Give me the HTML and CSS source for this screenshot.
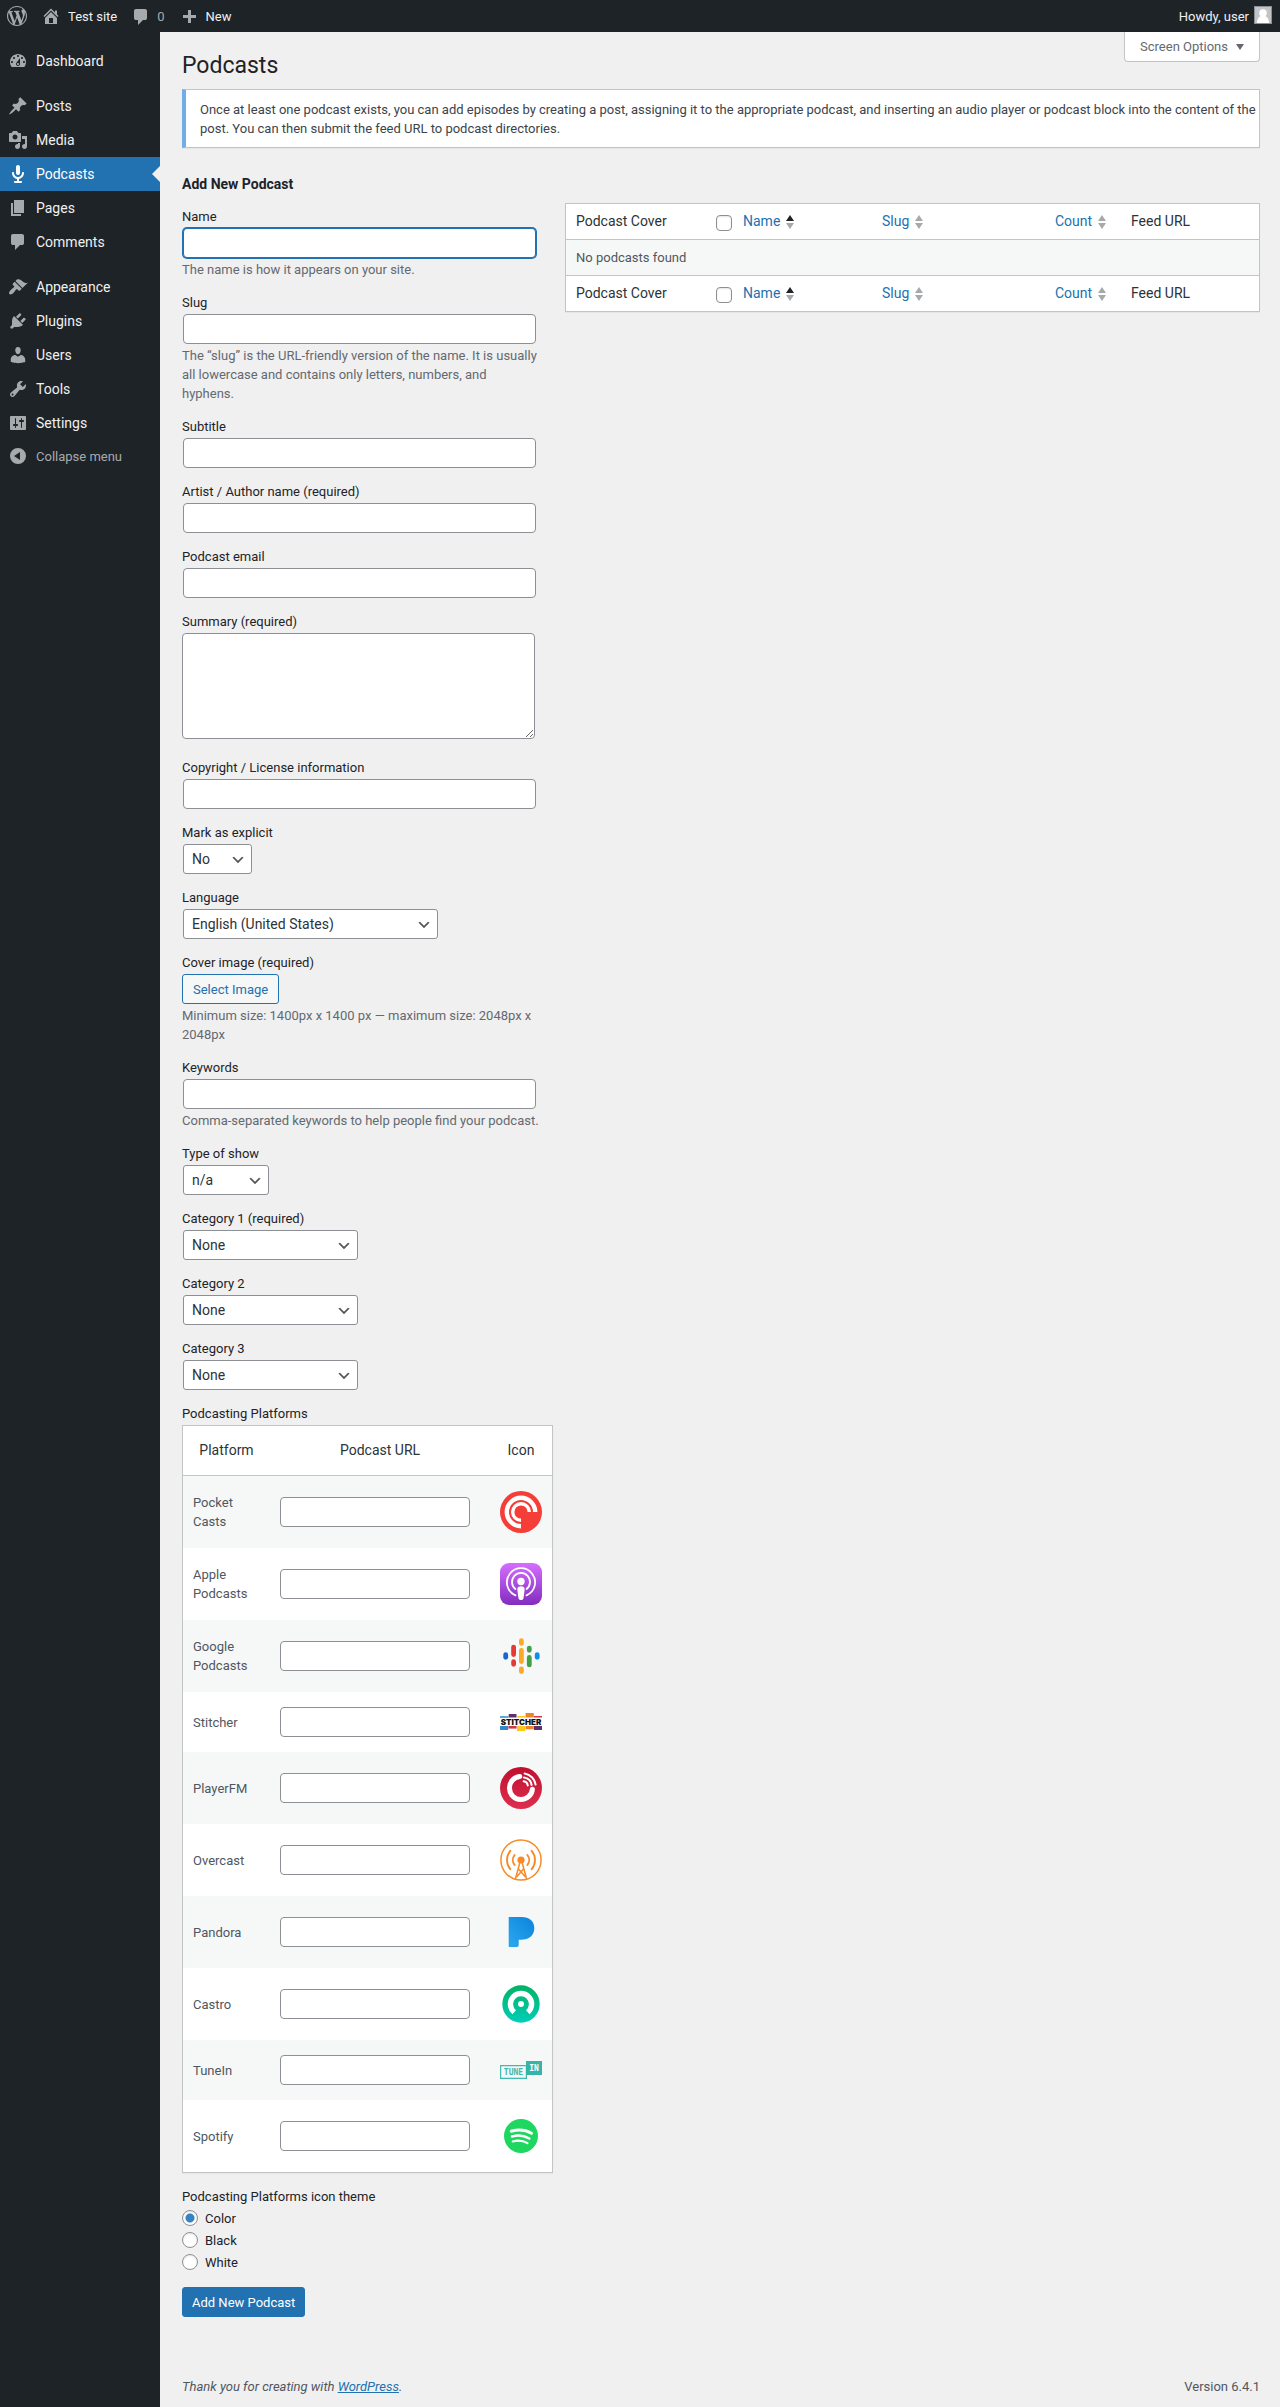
FILE: index.html
```html
<!DOCTYPE html>
<html lang="en-US">
<head>
<meta charset="utf-8">
<meta name="viewport" content="width=device-width, initial-scale=1">
<title>Podcasts ‹ Test site — WordPress</title>
<link rel="stylesheet" href="styles.css">
</head>
<body>
<header class="adminbar">
  <a class="bar-item" href="#" aria-label="About WordPress"><svg class="icon" viewBox="0 0 20 20"><path d="M20 10c0-5.51-4.49-10-10-10C4.48 0 0 4.49 0 10c0 5.52 4.48 10 10 10 5.51 0 10-4.48 10-10zM7.78 15.37L4.37 6.22c.55-.02 1.17-.08 1.17-.08.5-.06.44-1.13-.06-1.11 0 0-1.45.11-2.37.11-.18 0-.37 0-.58-.01C4.12 2.69 6.87 1.11 10 1.11c2.33 0 4.45.87 6.05 2.34-.68-.11-1.65.39-1.65 1.58 0 .74.45 1.36.9 2.1.35.61.55 1.36.55 2.46 0 1.49-1.4 5-1.4 5l-3.03-8.37c.54-.02.82-.17.82-.17.5-.05.44-1.25-.06-1.22 0 0-1.44.12-2.38.12-.87 0-2.33-.12-2.33-.12-.5-.03-.56 1.2-.06 1.22l.92.08 1.26 3.41zM17.41 10c.24-.64.74-1.87.43-4.25.7 1.29 1.05 2.71 1.05 4.25 0 3.29-1.73 6.24-4.4 7.78.97-2.59 1.94-5.2 2.92-7.78zM6.1 18.09C3.12 16.65 1.11 13.53 1.11 10c0-1.3.23-2.48.72-3.59C3.25 10.3 4.67 14.2 6.1 18.09zm4.03-6.63l2.58 6.98c-.86.29-1.76.45-2.71.45-.79 0-1.57-.11-2.29-.33.81-2.38 1.62-4.74 2.42-7.1z"/></svg></a>
  <a class="bar-item" href="#"><svg class="icon" viewBox="0 0 20 20"><path d="M16 8.5l1.53 1.53-1.06 1.06L10 4.6l-6.47 6.49-1.06-1.06L10 2.5l4 4v-2h2v4zm-6-2.46l6 5.99V18H4v-5.97zM12 17v-5H8v5h4z"/></svg>Test site</a>
  <a class="bar-item bar-count" href="#"><svg class="icon" viewBox="0 0 20 20"><path d="M5 2h9q.82 0 1.41.59T16 4v7q0 .82-.59 1.41T14 13h-2l-5 5v-5H5q-.82 0-1.41-.59T3 11V4q0-.82.59-1.41T5 2z"/></svg>0</a>
  <a class="bar-item" href="#"><svg class="icon" viewBox="0 0 20 20"><path d="M17 9v3h-5v5H9v-5H4V9h5V4h3v5h5z"/></svg>New</a>
  <a class="bar-item bar-user" href="#">Howdy, user<svg class="avatar" viewBox="0 0 16 16"><path fill="#c3c4c7" d="M0 0h16v16H0z"/><circle cx="8" cy="6" r="3.8" fill="#fff"/><path fill="#fff" d="M6 9h4c2.500.5 4 4 4 7H2c0-3 1.500-6.500 4-7z"/></svg></a>
</header>

<div class="shell">
  <nav class="menu" aria-label="Main menu">
    <ul>
      <li><a href="#"><svg class="icon" viewBox="0 0 20 20"><path d="M3.76 16h12.48c1.1-1.37 1.76-3.11 1.76-5 0-4.42-3.58-8-8-8s-8 3.58-8 8c0 1.89.66 3.63 1.76 5zM10 4c.55 0 1 .45 1 1s-.45 1-1 1-1-.45-1-1 .45-1 1-1zM6 6c.55 0 1 .45 1 1s-.45 1-1 1-1-.45-1-1 .45-1 1-1zm8 0c.55 0 1 .45 1 1s-.45 1-1 1-1-.45-1-1 .45-1 1-1zm-5.37 5.55L12 7v6c0 1.1-.9 2-2 2s-2-.9-2-2c0-.57.24-1.08.63-1.45zM4 10c.55 0 1 .45 1 1s-.45 1-1 1-1-.45-1-1 .45-1 1-1zm12 0c.55 0 1 .45 1 1s-.45 1-1 1-1-.45-1-1 .45-1 1-1zm-5 3c0-.55-.45-1-1-1s-1 .45-1 1 .45 1 1 1 1-.45 1-1z"/></svg>Dashboard</a></li>
      <li class="group"><a href="#"><svg class="icon" viewBox="0 0 20 20"><path d="M10.44 3.02l1.82-1.82 6.36 6.35-1.83 1.82c-1.05-.68-2.48-.57-3.41.36l-.75.75c-.92.93-1.04 2.35-.35 3.41l-1.83 1.82-2.41-2.41-2.8 2.79c-.42.42-3.38 2.71-3.8 2.29s1.86-3.39 2.28-3.81l2.79-2.79L4.1 9.36l1.83-1.82c1.05.69 2.48.57 3.4-.36l.75-.75c.93-.92 1.05-2.35.36-3.41z"/></svg>Posts</a></li>
      <li><a href="#"><svg class="icon" viewBox="0 0 20 20"><path d="M13 11V4c0-.55-.45-1-1-1h-1.67L9 1H5L3.67 3H2c-.55 0-1 .45-1 1v7c0 .55.45 1 1 1h10c.55 0 1-.45 1-1zM7 4.5c1.38 0 2.500 1.120 2.500 2.500S8.380 9.500 7 9.500 4.500 8.380 4.500 7 5.620 4.500 7 4.500zM14 6h5v10.500c0 1.380-1.120 2.500-2.500 2.500S14 17.880 14 16.500s1.120-2.500 2.500-2.500c.17 0 .34.02.5.05V9h-3V6zm-4 8.050V13h2v3.500c0 1.380-1.120 2.500-2.500 2.500S7 17.880 7 16.500 8.120 14 9.500 14c.17 0 .34.02.5.05z"/></svg>Media</a></li>
      <li><a class="current" href="#" aria-current="page"><svg class="icon" viewBox="0 0 20 20"><path d="M12 9V3c0-1.1-.89-2-2-2-1.12 0-2 .94-2 2v6c0 1.1.9 2 2 2 1.13 0 2-.94 2-2zm4 0c0 2.97-2.16 5.43-5 5.91V17h2c.56 0 1 .45 1 1s-.44 1-1 1H7c-.55 0-1-.45-1-1s.45-1 1-1h2v-2.09C6.17 14.43 4 11.97 4 9c0-.55.45-1 1-1 .56 0 1 .45 1 1 0 2.21 1.8 4 4 4 2.21 0 4-1.79 4-4 0-.55.45-1 1-1 .56 0 1 .45 1 1z"/></svg>Podcasts</a></li>
      <li><a href="#"><svg class="icon" viewBox="0 0 20 20"><path d="M6 15V2h10v13H6zm-1 1h8v2H3V5h2v11z"/></svg>Pages</a></li>
      <li><a href="#"><svg class="icon" viewBox="0 0 20 20"><path d="M5 2h9q.82 0 1.41.59T16 4v7q0 .82-.59 1.41T14 13h-2l-5 5v-5H5q-.82 0-1.41-.59T3 11V4q0-.82.59-1.41T5 2z"/></svg>Comments</a></li>
      <li class="group"><a href="#"><svg class="icon" viewBox="0 0 20 20"><path d="M14.48 11.06L7.41 3.99l1.5-1.5c.5-.56 2.3-.47 3.51.32 1.21.8 1.43 1.28 2.91 2.1 1.18.64 2.45 1.26 4.45.85zm-.71.71L6.7 4.7 4.93 6.47c-.39.39-.39 1.02 0 1.41l1.06 1.06c.39.39.39 1.03 0 1.42-.6.6-1.43 1.11-2.21 1.69-.35.26-.7.53-1.01.84C1.43 14.23.4 16.08 1.4 17.07c.99 1 2.84-.03 4.18-1.36.31-.31.58-.66.85-1.02.57-.78 1.08-1.61 1.69-2.21.39-.39 1.02-.39 1.41 0l1.06 1.06c.39.39 1.02.39 1.41 0z"/></svg>Appearance</a></li>
      <li><a href="#"><svg class="icon" viewBox="0 0 20 20"><path d="M13.11 4.36L9.87 7.6 8 5.73l3.24-3.24c.35-.34 1.05-.2 1.56.32.52.51.66 1.21.31 1.55zm-8 1.77l.91-1.12 9.01 9.01-1.19.84c-.71.71-2.63 1.16-3.82 1.16H6.14L4.9 17.26c-.59.59-1.54.59-2.12 0-.59-.58-.59-1.53 0-2.12l1.24-1.24v-3.88c0-1.13.4-3.19 1.09-3.89zm7.26 3.97l3.24-3.24c.34-.35 1.04-.21 1.55.31.52.51.66 1.21.31 1.55l-3.24 3.25z"/></svg>Plugins</a></li>
      <li><a href="#"><svg class="icon" viewBox="0 0 20 20"><path d="M10 9.25c-2.27 0-2.73-3.44-2.73-3.44C7 4.02 7.82 2 9.97 2c2.16 0 2.98 2.02 2.71 3.81 0 0-.41 3.44-2.68 3.44zm0 2.57L12.72 10c2.39 0 4.52 2.33 4.52 4.53v2.49s-3.65 1.13-7.24 1.13c-3.65 0-7.24-1.13-7.24-1.13v-2.49c0-2.25 1.94-4.48 4.47-4.48z"/></svg>Users</a></li>
      <li><a href="#"><svg class="icon" viewBox="0 0 20 20"><path d="M16.68 9.77c-1.34 1.34-3.3 1.67-4.95.99l-5.41 6.52c-.99.99-2.59.99-3.58 0s-.99-2.59 0-3.57l6.52-5.42c-.68-1.65-.35-3.61.99-4.95 1.28-1.28 3.12-1.62 4.72-1.06l-2.89 2.89 2.82 2.82 2.86-2.87c.53 1.58.18 3.39-1.08 4.65zM3.81 16.21c.4.39 1.04.39 1.43 0 .4-.4.4-1.04 0-1.43-.39-.4-1.03-.4-1.43 0-.39.39-.39 1.03 0 1.43z"/></svg>Tools</a></li>
      <li><a href="#"><svg class="icon" viewBox="0 0 20 20"><path d="M18 16V4c0-.55-.45-1-1-1H3c-.55 0-1 .45-1 1v12c0 .55.45 1 1 1h14c.55 0 1-.45 1-1zM8 11h1c.55 0 1 .45 1 1s-.45 1-1 1H8v1.500c0 .28-.22.5-.5.5s-.5-.22-.5-.5V13H6c-.55 0-1-.45-1-1s.45-1 1-1h1V5.500c0-.28.22-.5.5-.5s.5.22.5.5V11zm5-2h-1c-.55 0-1-.45-1-1s.45-1 1-1h1V5.500c0-.28.22-.5.5-.5s.5.22.5.5V7h1c.55 0 1 .45 1 1s-.45 1-1 1h-1v5.500c0 .28-.22.5-.5.5s-.5-.22-.5-.5V9z"/></svg>Settings</a></li>
    </ul>
    <button class="collapse" type="button"><svg class="icon" viewBox="0 0 20 20"><path fill-rule="evenodd" d="M10 2a8 8 0 1 0 0 16 8 8 0 0 0 0-16zM12 6v8L6 10z"/></svg>Collapse menu</button>
  </nav>

  <div class="content">
    <main>
      <div class="page-head">
        <h1>Podcasts</h1>
        <button class="screen-options" type="button">Screen Options<svg width="8" height="6" viewBox="0 0 8 6"><path d="M0 0h8L4 6z"/></svg></button>
      </div>

      <div class="notice">
        <p>Once at least one podcast exists, you can add episodes by creating a post, assigning it to the appropriate podcast, and inserting an audio player or podcast block into the content of the post. You can then submit the feed URL to podcast directories.</p>
      </div>

      <div class="columns">
        <form class="add-form">
          <h2>Add New Podcast</h2>
          <div class="field"><label for="name">Name</label><input class="text focused" id="name" type="text"><p class="help">The name is how it appears on your site.</p></div>
          <div class="field"><label for="slug">Slug</label><input class="text" id="slug" type="text"><p class="help">The “slug” is the URL-friendly version of the name. It is usually all lowercase and contains only letters, numbers, and<br>hyphens.</p></div>
          <div class="field"><label for="subtitle">Subtitle</label><input class="text" id="subtitle" type="text"></div>
          <div class="field"><label for="artist">Artist / Author name (required)</label><input class="text" id="artist" type="text"></div>
          <div class="field"><label for="email">Podcast email</label><input class="text" id="email" type="text"></div>
          <div class="field"><label for="summary">Summary (required)</label><textarea id="summary"></textarea></div>
          <div class="field"><label for="copyright">Copyright / License information</label><input class="text" id="copyright" type="text"></div>
          <div class="field"><label for="explicit">Mark as explicit</label><select class="w-xs" id="explicit"><option>No</option><option>Yes</option></select></div>
          <div class="field"><label for="language">Language</label><select class="w-lg" id="language"><option>English (United States)</option></select></div>
          <div class="field"><label for="cover">Cover image (required)</label><button class="button" id="cover" type="button">Select Image</button><p class="help">Minimum size: 1400px x 1400 px — maximum size: 2048px x 2048px</p></div>
          <div class="field"><label for="keywords">Keywords</label><input class="text" id="keywords" type="text"><p class="help">Comma-separated keywords to help people find your podcast.</p></div>
          <div class="field"><label for="type">Type of show</label><select class="w-sm" id="type"><option>n/a</option></select></div>
          <div class="field"><label for="cat1">Category 1 (required)</label><select class="w-md" id="cat1"><option>None</option></select></div>
          <div class="field"><label for="cat2">Category 2</label><select class="w-md" id="cat2"><option>None</option></select></div>
          <div class="field"><label for="cat3">Category 3</label><select class="w-md" id="cat3"><option>None</option></select></div>

          <div class="field-table">
            <span class="label" id="platforms-label">Podcasting Platforms</span>
            <table class="platforms" aria-labelledby="platforms-label">
              <colgroup><col class="p-name"><col class="p-url"><col class="p-icon"></colgroup>
              <thead><tr><th scope="col">Platform</th><th scope="col">Podcast URL</th><th scope="col">Icon</th></tr></thead>
              <tbody>
                <tr><td><label for="u1">Pocket Casts</label></td><td><input id="u1" type="text"></td><td><svg class="logo" viewBox="0 0 42 42"><circle cx="21" cy="21" r="21" fill="#f43e37"/><g fill="none" stroke="#fff"><path stroke-width="4.400" d="M21 35.200A14.200 14.200 0 1 1 35.200 21"/><path stroke-width="3.400" d="M21 29.300A8.300 8.300 0 1 1 29.300 21"/></g></svg></td></tr>
                <tr><td><label for="u2">Apple Podcasts</label></td><td><input id="u2" type="text"></td><td><svg class="logo" viewBox="0 0 42 42"><defs><linearGradient id="ga" x1="0" y1="0" x2="0" y2="1"><stop offset="0" stop-color="#d56eff"/><stop offset="1" stop-color="#822cbe"/></linearGradient></defs><rect width="42" height="42" rx="9" fill="url(#ga)"/><g fill="none" stroke="#fff" stroke-width="1.800" stroke-linecap="round"><path d="M15.500 32.300A14.100 14.100 0 1 1 26.500 32.300"/><path d="M15.400 26A9 9 0 1 1 26.600 26"/></g><circle cx="21" cy="18.500" r="3.700" fill="#fff"/><path fill="#fff" d="M17.400 26c0-1.800 1.300-2.800 3.600-2.800s3.600 1 3.600 2.800c0 2.200-.6 6-1.100 9-.2 1.400-1 2-2.500 2s-2.300-.6-2.500-2c-.5-3-1.100-6.800-1.100-9z"/></svg></td></tr>
                <tr><td><label for="u3">Google Podcasts</label></td><td><input id="u3" type="text"></td><td><svg class="logo" viewBox="0 0 42 42"><g fill="none" stroke-width="4.800" stroke-linecap="round"><path stroke="#1b66c9" d="M5.700 19.700v2.600"/><path stroke="#e53935" d="M13.600 12.100v7.500M13.600 26.700v2.600"/><path stroke="#fca828" d="M21.400 5.700v2.600M21.400 15.400v11.200M21.400 34v2.600"/><path stroke="#43a047" d="M29.300 13.100v2.200M29.300 22.400v7.500"/><path stroke="#0f8ee9" d="M37.200 19.700v2.600"/></g></svg></td></tr>
                <tr><td><label for="u4">Stitcher</label></td><td><input id="u4" type="text"></td><td><svg class="logo wide" viewBox="0 0 42 18"><path fill="#5ba8dc" d="M0 3h8.400v2H0z"/><path fill="#5f2f6e" d="M8.700 1h7.800v3.500H8.700z"/><path fill="#fcc81e" d="M17 3h8.300v1.500H17z"/><path fill="#f08327" d="M25.600 0h8.200v4.500h-8.200z"/><path fill="#cf3947" d="M34 3h8v1.500h-8z"/><path fill="#2c8ac8" d="M0 13h8.200v4H0z"/><path fill="#cf3947" d="M8.400 13h8.200v2.600H8.400z"/><path fill="#fcc81e" d="M17 13h8.300v5H17z"/><path fill="#f08327" d="M25.600 13h8.200v3.300h-8.200z"/><path fill="#5f2f6e" d="M34 13h8v4h-8z"/><text x="21" y="12" class="stitcher-word">STITCHER</text></svg></td></tr>
                <tr><td><label for="u5">PlayerFM</label></td><td><input id="u5" type="text"></td><td><svg class="logo" viewBox="0 0 42 42"><defs><linearGradient id="gp" x1="0" y1="0" x2="0" y2="1"><stop offset="0" stop-color="#bf0f2d"/><stop offset="1" stop-color="#df2f4f"/></linearGradient></defs><circle cx="21" cy="21" r="21" fill="url(#gp)"/><g fill="none" stroke="#fff" stroke-linecap="round"><path stroke-width="5" d="M19.800 9.600A11.500 11.500 0 1 0 32.400 22.200"/><g stroke-width="2"><path d="M24.600 6.400A13.500 13.500 0 0 1 35.600 17.600"/><path d="M24 10.400A9 9 0 0 1 31.600 18"/><path d="M23.600 14.200A5 5 0 0 1 27.800 18.400"/></g></g></svg></td></tr>
                <tr><td><label for="u6">Overcast</label></td><td><input id="u6" type="text"></td><td><svg class="logo" viewBox="0 0 42 42"><g fill="none" stroke="#f68b28" stroke-width="1.500"><circle cx="21" cy="21" r="20.100"/><path stroke-width="1.900" stroke-linecap="round" d="M14.600 16a8 8 0 0 0 0 10M27.400 16a8 8 0 0 1 0 10M10.300 11.800a14.500 14.500 0 0 0 0 18.400M31.700 11.800a14.500 14.500 0 0 1 0 18.400"/><path d="M20.300 22l-5 18.200M21.700 22l5 18.200M18.500 30l7 8M23.500 30l-7 8"/></g><circle cx="21" cy="21" r="3.600" fill="#f68b28"/></svg></td></tr>
                <tr><td><label for="u7">Pandora</label></td><td><input id="u7" type="text"></td><td><svg class="logo" viewBox="0 0 42 42"><defs><linearGradient id="gd" x1="1" y1="0" x2="0" y2="1"><stop offset="0" stop-color="#0c83dc"/><stop offset="1" stop-color="#2aa9ee"/></linearGradient></defs><path fill="url(#gd)" d="M8.700 6H21.500c8 0 12.800 4.300 12.800 11.200 0 7-5.300 11.500-13.200 11.500h-2.400V34c0 1.300-.7 2-2 2h-8z"/></svg></td></tr>
                <tr><td><label for="u8">Castro</label></td><td><input id="u8" type="text"></td><td><svg class="logo" viewBox="0 0 42 42"><defs><linearGradient id="gc" x1="0" y1="0" x2="0" y2="1"><stop offset="0" stop-color="#00b265"/><stop offset="1" stop-color="#00cfb8"/></linearGradient></defs><circle cx="21" cy="21" r="18.700" fill="url(#gc)"/><path fill="none" stroke="#fff" stroke-width="5.400" d="M14.200 29.200A10.600 10.600 0 1 1 27.800 29.200"/><circle cx="21" cy="21" r="3" fill="#fff"/></svg></td></tr>
                <tr><td><label for="u9">TuneIn</label></td><td><input id="u9" type="text"></td><td><svg class="logo wide" viewBox="0 0 42 18"><path fill="none" stroke="#42b9ad" stroke-width="1.200" d="M.6 4.600h25.800v12.800H.6z"/><path fill="#36b4a7" d="M26 0h16v14H26z"/><text x="13.500" y="13.500" class="tune-word">TUNE</text><text x="34" y="9.500" class="tune-word tune-light">IN</text></svg></td></tr>
                <tr><td><label for="u10">Spotify</label></td><td><input id="u10" type="text"></td><td><svg class="logo" viewBox="0 0 42 42"><circle cx="21" cy="21" r="17" fill="#1ed760"/><g fill="none" stroke="#fff" stroke-linecap="round"><path stroke-width="3" d="M11.200 16.200c7-2 14.500-1.300 20.300 2"/><path stroke-width="2.500" d="M12 21.500c6-1.700 12.200-1 17.300 2"/><path stroke-width="2.100" d="M12.700 26.400c5.200-1.400 10.300-.9 14.800 1.800"/></g></svg></td></tr>
              </tbody>
            </table>
          </div>

          <fieldset class="theme">
            <legend>Podcasting Platforms icon theme</legend>
            <label><input type="radio" name="theme" checked>Color</label>
            <label><input type="radio" name="theme">Black</label>
            <label><input type="radio" name="theme">White</label>
          </fieldset>

          <button class="button primary" type="submit">Add New Podcast</button>
        </form>

        <section class="list">
          <table>
            <colgroup><col class="c-cover"><col class="c-check"><col class="c-name"><col class="c-slug"><col class="c-count"><col class="c-feed"></colgroup>
            <thead>
              <tr>
                <th scope="col">Podcast Cover</th>
                <td class="check"><input type="checkbox" aria-label="Select all"></td>
                <th scope="col"><a href="#">Name<svg class="sort" viewBox="0 0 8 14"><path class="on" d="M0 6h8L4 0z"/><path d="M0 8h8l-4 6z"/></svg></a></th>
                <th scope="col"><a href="#">Slug<svg class="sort" viewBox="0 0 8 14"><path d="M0 6h8L4 0z"/><path d="M0 8h8l-4 6z"/></svg></a></th>
                <th scope="col"><a href="#">Count<svg class="sort" viewBox="0 0 8 14"><path d="M0 6h8L4 0z"/><path d="M0 8h8l-4 6z"/></svg></a></th>
                <th scope="col">Feed URL</th>
              </tr>
            </thead>
            <tbody><tr><td colspan="6">No podcasts found</td></tr></tbody>
            <tfoot>
              <tr>
                <th scope="col">Podcast Cover</th>
                <td class="check"><input type="checkbox" aria-label="Select all"></td>
                <th scope="col"><a href="#">Name<svg class="sort" viewBox="0 0 8 14"><path class="on" d="M0 6h8L4 0z"/><path d="M0 8h8l-4 6z"/></svg></a></th>
                <th scope="col"><a href="#">Slug<svg class="sort" viewBox="0 0 8 14"><path d="M0 6h8L4 0z"/><path d="M0 8h8l-4 6z"/></svg></a></th>
                <th scope="col"><a href="#">Count<svg class="sort" viewBox="0 0 8 14"><path d="M0 6h8L4 0z"/><path d="M0 8h8l-4 6z"/></svg></a></th>
                <th scope="col">Feed URL</th>
              </tr>
            </tfoot>
          </table>
        </section>
      </div>
    </main>

    <footer class="foot">
      <p><em>Thank you for creating with <a href="#">WordPress</a>.</em></p>
      <p>Version 6.4.1</p>
    </footer>
  </div>
</div>
</body>
</html>
```
FILE: styles.css
```css
*, *::before, *::after { box-sizing: border-box; }

body {
  margin: 0;
  min-height: 100vh;
  display: flex;
  flex-direction: column;
  background: #f0f0f1;
  color: #3c434a;
  font: 13px/19px Roboto, "Liberation Sans", sans-serif;
}

h1, h2, p, ul { margin: 0; padding: 0; font-weight: 400; }
ul { list-style: none; }
a { color: #2271b1; }
button, input, select, textarea { font-family: inherit; margin: 0; }

.icon { width: 20px; height: 20px; flex: none; fill: #a7aaad; }

/* Top bar */
.adminbar {
  display: flex;
  height: 32px;
  padding: 0 8px 0 7px;
  gap: 14px;
  background: #1d2327;
}
.bar-item {
  display: flex;
  align-items: center;
  gap: 7px;
  color: #f0f0f1;
  text-decoration: none;
}
.bar-count { gap: 6px; color: #a7aaad; }
.bar-count .icon { margin-top: 2px; }
.bar-user { margin-left: auto; gap: 5px; }
.avatar { width: 18px; height: 18px; margin-top: -2px; border: 1px solid #8c8f94; }

/* Side menu */
.shell { display: flex; flex: 1; }
.menu {
  flex: none;
  width: 160px;
  padding-top: 12px;
  background: #1d2327;
}
.menu .group { margin-top: 11px; }
.menu li a, .collapse {
  display: flex;
  align-items: center;
  gap: 8px;
  width: 100%;
  height: 34px;
  padding: 0 8px;
  color: #f0f0f1;
  font-size: 14px;
  text-decoration: none;
}
.menu .current {
  position: relative;
  background: #2271b1;
  color: #fff;
}
.current .icon { fill: #fff; }
.menu .current::after {
  content: "";
  position: absolute;
  top: 9px;
  right: 0;
  border: 8px solid transparent;
  border-left-width: 0;
  border-right-color: #f0f0f1;
}
.collapse { height: 32px; border: 0; background: none; color: #a7aaad; font-size: 13px; }

/* Page head */
.content {
  flex: 1;
  min-width: 0;
  display: flex;
  flex-direction: column;
  justify-content: space-between;
  padding: 0 20px 0 22px;
}
.page-head {
  display: flex;
  justify-content: space-between;
  align-items: flex-start;
}
h1 { padding: 19px 0 8px; color: #1d2327; font-size: 23px; line-height: 30px; }
.screen-options {
  display: flex;
  align-items: center;
  gap: 8px;
  height: 30px;
  padding: 0 15px;
  border: 1px solid #c3c4c7;
  border-top: 0;
  border-radius: 0 0 4px 4px;
  background: #fff;
  color: #646970;
  font-size: 13px;
}
.screen-options svg { fill: #646970; }
.notice {
  padding: 10px 2px 9px 14px;
  border: 1px solid #c3c4c7;
  border-left: 4px solid #72aee6;
  background: #fff;
  box-shadow: 0 1px 1px rgba(0, 0, 0, .04);
}

/* Form column */
.columns {
  display: grid;
  grid-template-columns: minmax(0, 371fr) minmax(0, 695fr);
  gap: 12px;
  align-items: start;
  margin-top: 26px;
}
h2 { margin-bottom: 13px; color: #1d2327; font-size: 14px; font-weight: 700; line-height: 20px; }
.field { display: flow-root; margin-bottom: 13px; }
.field > label, .label, legend {
  display: block;
  padding: 0;
  color: #1d2327;
  line-height: 20px;
}
.help { margin: 2px 0 1px; color: #646970; }
.text, textarea, select, .platforms input {
  display: block;
  height: 30px;
  border: 1px solid #8c8f94;
  border-radius: 4px;
  background: #fff;
  color: #2c3338;
  font-size: 14px;
}
.text, .platforms input { padding: 0 8px; }
.text { width: calc(100% - 18px); margin: 1px; }
.text.focused { border-color: #2271b1; box-shadow: 0 0 0 1px #2271b1; }
textarea { width: calc(100% - 18px); height: 106px; margin: 1px 0 6px; padding: 2px 6px; }
select {
  appearance: none;
  margin: 1px;
  padding: 0 24px 0 8px;
  border-radius: 3px;
  background: #fff url("data:image/svg+xml,%3Csvg xmlns='http://www.w3.org/2000/svg' viewBox='0 0 20 20'%3E%3Cpath d='M5 6l5 5 5-5 2 1-7 7-7-7 2-1z' fill='%23555'/%3E%3C/svg%3E") no-repeat right 5px top 55% / 16px 16px;
}
.w-xs { width: 69px; }
.w-sm { width: 86px; }
.w-md { width: 175px; }
.w-lg { width: 255px; }
.button {
  display: block;
  height: 30px;
  margin: 1px 0;
  padding: 0 10px;
  border: 1px solid #2271b1;
  border-radius: 3px;
  background: #f6f7f7;
  color: #2271b1;
  font-size: 13px;
}
.button.primary { margin: 14px 0 0; padding: 0 9px; background: #2271b1; color: #fff; }

/* Tables */
table {
  width: 100%;
  table-layout: fixed;
  border: 1px solid #c3c4c7;
  border-spacing: 0;
  background: #fff;
  box-shadow: 0 1px 1px rgba(0, 0, 0, .04);
}
th { color: #2c3338; font-size: 14px; font-weight: 400; }
thead th, thead td { border-bottom: 1px solid #c3c4c7; }
tfoot th, tfoot td { border-top: 1px solid #c3c4c7; }
td { color: #50575e; }

.platforms { margin: 1px 0 14px; }
.platforms th, .platforms td { padding: 15px 10px; vertical-align: middle; }
.platforms tbody tr:nth-child(odd) { background: #f6f7f7; }
.platforms td label { display: block; }
.platforms input { width: 95%; }
.p-name { width: 87px; }
.p-url { width: 220px; }
.p-icon { width: 62px; }
.logo { display: block; width: 42px; height: 42px; }
.logo.wide { height: 18px; }
.stitcher-word { fill: #111; font: 900 8px Inter, sans-serif; text-anchor: middle; }
.tune-word { fill: #42b9ad; font: 700 8px "DejaVu Sans Mono", monospace; text-anchor: middle; }
.tune-light { fill: #fff; }

.list { padding-top: 29px; }
.list th, .list td { height: 36px; padding: 0 10px; text-align: left; }
.list tbody td { height: 35px; background: #f6f7f7; }
.list .check { padding: 3px 0 0 8px; }
.list th a { display: flex; align-items: center; gap: 6px; text-decoration: none; }
.sort { width: 8px; height: 14px; fill: #a7aaad; }
.sort .on { fill: #1d2327; }
.c-cover { width: 142px; }
.c-check { width: 25px; }
.c-name { width: 139px; }
.c-slug { width: 173px; }
.c-count { width: 76px; }
.c-feed { width: 138px; }

/* Checks and radios */
input[type="checkbox"], input[type="radio"] {
  appearance: none;
  display: block;
  flex: none;
  width: 16px;
  height: 16px;
  border: 1px solid #8c8f94;
  border-radius: 4px;
  background: #fff;
  box-shadow: inset 0 1px 2px rgba(0, 0, 0, .1);
}
input[type="radio"] { border-radius: 50%; }
input[type="radio"]:checked { background: #fff radial-gradient(circle, #3582c4 4px, transparent 5px); }
.theme { margin: 0; padding: 0; border: 0; }
.theme label {
  display: flex;
  align-items: center;
  gap: 7px;
  height: 22px;
  color: #1d2327;
}

.foot {
  display: flex;
  justify-content: space-between;
  padding: 60px 0 10px;
  color: #50575e;
  line-height: 20px;
}
```
